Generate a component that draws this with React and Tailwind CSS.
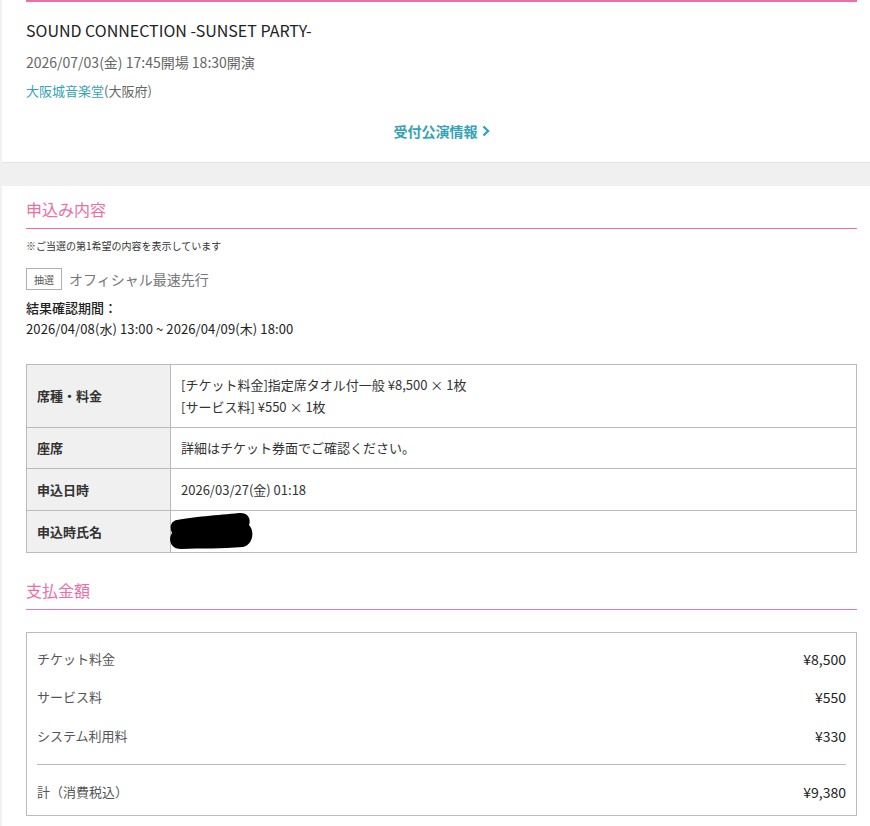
export default function App() {
  const font = { fontFamily: '"Noto Sans CJK JP", "Noto Sans", sans-serif' };
  return (
    <div className="min-h-[826px] bg-[#f0f0f0] pl-[2px] pb-[20px] font-['Noto_Sans_CJK_JP',sans-serif]" style={font}>
      {/* Card 1 */}
      <div className="bg-white pl-[24px] pr-[13px] pb-[20px] border-b border-[#e2e2e2]">
        <div className="h-[2px] bg-[#ec6ea4]" />
        <div className="mt-[16px] text-[16px] leading-[24px] text-[#222]">SOUND CONNECTION -SUNSET PARTY-</div>
        <div className="mt-[8px] text-[14px] leading-[24px] text-[#666]">2026/07/03(金) 17:45開場 18:30開演</div>
        <div className="mt-[6px] text-[13px] leading-[22px] text-[#666]">
          <span className="text-[#35a3b5]">大阪城音楽堂</span>(大阪府)
        </div>
        <div className="mt-[18px] flex justify-center">
          <div className="flex items-center gap-[4px] text-[14px] leading-[22px] font-bold text-[#35a3b5]">
            受付公演情報
            <svg width="8" height="12" viewBox="0 0 8 12">
              <polyline points="1.5,1.5 6,6 1.5,10.5" fill="none" stroke="#35a3b5" strokeWidth="2.4" strokeLinejoin="miter" />
            </svg>
          </div>
        </div>
      </div>

      {/* Card 2 */}
      <div className="mt-[23px] bg-white pl-[24px] pr-[13px] pt-[11px] pb-[10px]">
        <div className="pb-[7px] border-b border-[#ec6ea4] text-[16px] leading-[24px] text-[#ec6ea4]">申込み内容</div>
        <div className="mt-[10px] text-[10px] leading-[14px] text-[#333]">※ご当選の第1希望の内容を表示しています</div>
        <div className="mt-[15px] flex items-center gap-[7px]">
          <div className="h-[22px] w-[36px] border border-[#b0b0b0] flex items-center justify-center text-[10px] text-[#555]">抽選</div>
          <div className="text-[14px] leading-[22px] text-[#777]">オフィシャル最速先行</div>
        </div>
        <div className="mt-[7px] text-[13px] leading-[21px] text-[#222] font-medium">結果確認期間：</div>
        <div className="text-[13px] leading-[21px] text-[#222] tracking-[0.1px]">2026/04/08(水) 13:00 ~ 2026/04/09(木) 18:00</div>

        <div className="mt-[25px] border border-[#bbb] text-[13px] text-[#333]">
          <div className="flex h-[63px] border-b border-[#bbb]">
            <div className="w-[144px] shrink-0 bg-[#f0f0f0] border-r border-[#bbb] flex items-center pl-[10px] font-bold text-[#333]">席種・料金</div>
            <div className="flex flex-col justify-center pl-[10px] leading-[22px]">
              <div>[チケット料金]指定席タオル付一般 ¥8,500 × 1枚</div>
              <div>[サービス料] ¥550 × 1枚</div>
            </div>
          </div>
          <div className="flex h-[41px] border-b border-[#bbb]">
            <div className="w-[144px] shrink-0 bg-[#f0f0f0] border-r border-[#bbb] flex items-center pl-[10px] font-bold text-[#333]">座席</div>
            <div className="flex items-center pl-[10px]">詳細はチケット券面でご確認ください。</div>
          </div>
          <div className="flex h-[42px] border-b border-[#bbb]">
            <div className="w-[144px] shrink-0 bg-[#f0f0f0] border-r border-[#bbb] flex items-center pl-[10px] font-bold text-[#333]">申込日時</div>
            <div className="flex items-center pl-[10px]">2026/03/27(金) 01:18</div>
          </div>
          <div className="flex h-[41px]">
            <div className="w-[144px] shrink-0 bg-[#f0f0f0] border-r border-[#bbb] flex items-center pl-[10px] font-bold text-[#333]">申込時氏名</div>
            <div className="relative flex-1">
              <svg className="absolute left-[-2px] top-[1px]" width="84" height="38" viewBox="0 0 84 38">
                <path d="M8 8 C 22 5, 50 3, 70 1 C 80 0, 82 8, 80 13 C 86 19, 84 33, 74 35 C 52 37, 32 36, 12 37 C 1 37, -1 27, 3 21 C 0 15, 2 9, 8 8 Z" fill="#000" />
              </svg>
            </div>
          </div>
        </div>

        <div className="mt-[25px] pb-[7px] border-b border-[#e97aa6] text-[16px] leading-[24px] text-[#ec6ea4]">支払金額</div>

        <div className="mt-[22px] border border-[#bbb] px-[10px] pt-[16px] pb-[13px]">
          <div className="flex justify-between items-center h-[20px]">
            <span className="text-[13px] text-[#555]">チケット料金</span>
            <span className="text-[14px] text-[#222]">¥8,500</span>
          </div>
          <div className="mt-[18px] flex justify-between items-center h-[20px]">
            <span className="text-[13px] text-[#555]">サービス料</span>
            <span className="text-[14px] text-[#222]">¥550</span>
          </div>
          <div className="mt-[19px] flex justify-between items-center h-[20px]">
            <span className="text-[13px] text-[#555]">システム利用料</span>
            <span className="text-[14px] text-[#222]">¥330</span>
          </div>
          <div className="mt-[18px] h-px bg-[#bbb]" />
          <div className="mt-[17px] flex justify-between items-center h-[20px]">
            <span className="text-[13px] text-[#555]">計（消費税込）</span>
            <span className="text-[14px] text-[#222]">¥9,380</span>
          </div>
        </div>
      </div>
    </div>
  );
}
